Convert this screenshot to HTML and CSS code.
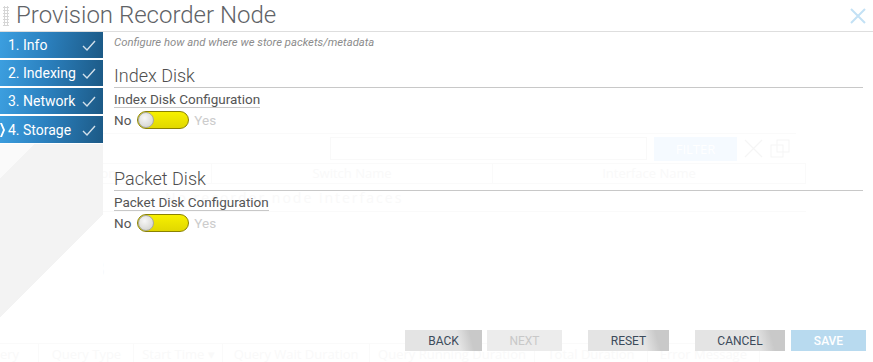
FILE: index.html
```html
<!DOCTYPE html>
<html lang="en">
<head>
  <meta charset="UTF-8" />
  <meta name="viewport" content="width=device-width, initial-scale=1.0" />
  <title>Provision Recorder Node</title>
  <link rel="stylesheet" href="styles.css">
</head>
<body>

  <!-- page behind the dialog, shows through faintly -->
  <div class="backdrop">
    <div class="ghost-toolbar">
      <div class="ghost-input"></div>
      <div class="ghost-filter">FILTER</div>
      <svg class="ghost-icon" width="19" height="19" viewBox="0 0 19 19"><path d="M1 1 L18 18 M18 1 L1 18" stroke="#f5f5f5" stroke-width="1.2" fill="none"/></svg>
      <svg class="ghost-icon" width="20" height="20" viewBox="0 0 20 20"><rect x="1" y="6" width="12" height="12" stroke="#f5f5f5" fill="none"/><rect x="7" y="1" width="12" height="12" stroke="#f5f5f5" fill="none"/></svg>
    </div>
    <div class="ghost-table">
      <div class="ghost-head">
        <div class="gcell first">Description</div>
        <div class="gcell second">Switch Name</div>
        <div class="gcell third">Interface Name</div>
      </div>
      <div class="ghost-empty">No recorder node interfaces</div>
    </div>
    <div class="ghost-size">256.00 MB</div>
    <div class="ghost-grid">
      <div class="gcol w40 right">ery</div>
      <div class="gcol w97">Query Type</div>
      <div class="gcol w91">Start Time ▾</div>
      <div class="gcol w150">Query Wait Duration</div>
      <div class="gcol w170">Query Running Duration</div>
      <div class="gcol w115">Total Duration</div>
      <div class="gcol w115">Error Message</div>
    </div>
  </div>

  <div class="modal">
    <div class="modal-head">
      <div class="grip"></div>
      <h1 class="modal-title">Provision Recorder Node</h1>
      <svg class="close" width="16" height="16" viewBox="0 0 16 16"><path d="M1 1 L15 15 M15 1 L1 15" stroke="#c3e1f5" stroke-width="2" fill="none"/></svg>
    </div>

    <div class="modal-body">
      <nav class="steps">
        <div class="step"><span>1. Info</span><svg class="tick" width="14" height="11" viewBox="0 0 14 11"><path d="M1 6 L5 10 L13 1" stroke="rgba(255,255,255,0.8)" stroke-width="1.4" fill="none"/></svg></div>
        <div class="step"><span>2. Indexing</span><svg class="tick" width="14" height="11" viewBox="0 0 14 11"><path d="M1 6 L5 10 L13 1" stroke="rgba(255,255,255,0.8)" stroke-width="1.4" fill="none"/></svg></div>
        <div class="step"><span>3. Network</span><svg class="tick" width="14" height="11" viewBox="0 0 14 11"><path d="M1 6 L5 10 L13 1" stroke="rgba(255,255,255,0.8)" stroke-width="1.4" fill="none"/></svg></div>
        <div class="step active">
          <svg class="marker" width="6" height="14" viewBox="0 0 6 14"><polygon points="0,0 2,0 5,7 2,14 0,14 3,7" fill="#ffffff"/></svg>
          <span>4. Storage</span><svg class="tick" width="14" height="11" viewBox="0 0 14 11"><path d="M1 6 L5 10 L13 1" stroke="rgba(255,255,255,0.8)" stroke-width="1.4" fill="none"/></svg>
        </div>
        <div class="steps-fill"></div>
      </nav>

      <main class="pane">
        <p class="hint">Configure how and where we store packets/metadata</p>

        <section class="disk">
          <h2>Index Disk</h2>
          <div class="field-label">Index Disk Configuration</div>
          <div class="switch-row">
            <span class="no">No</span>
            <span class="switch"><span class="knob"></span></span>
            <span class="yes">Yes</span>
          </div>
        </section>

        <section class="disk">
          <h2>Packet Disk</h2>
          <div class="field-label">Packet Disk Configuration</div>
          <div class="switch-row">
            <span class="no">No</span>
            <span class="switch"><span class="knob"></span></span>
            <span class="yes">Yes</span>
          </div>
        </section>
      </main>
    </div>

    <div class="actions">
      <button class="btn back">BACK</button>
      <button class="btn next" disabled>NEXT</button>
      <button class="btn reset">RESET</button>
      <button class="btn cancel">CANCEL</button>
      <button class="btn save">SAVE</button>
    </div>
  </div>

</body>
</html>
```

FILE: styles.css
```css
body {
  font-family: Roboto, "Liberation Sans", sans-serif;
  background-color: #ffffff;
  margin: 0;
  width: 873px;
  height: 362px;
  overflow: hidden;
  position: relative;
}

/* ---------- faint page behind the dialog ---------- */

.backdrop {
  padding-top: 133px;
  color: #f9f9f9;
  font-size: 13px;
  font-family: "Open Sans", sans-serif;
}

.ghost-toolbar {
  display: flex;
  align-items: center;
  width: 796px;
  height: 30px;
  border-top: 1px solid #fafafa;
  box-sizing: border-box;
}

.ghost-input {
  margin-left: 330px;
  width: 317px;
  height: 23px;
  border: 1px solid #f9f9f9;
  box-sizing: border-box;
}

.ghost-filter {
  margin-left: 7px;
  width: 83px;
  height: 24px;
  line-height: 24px;
  text-align: center;
  background-color: #f5faff;
  color: #ffffff;
}

.ghost-icon {
  margin-left: 7px;
}

.ghost-table {
  width: 806px;
}

.ghost-head {
  display: flex;
  height: 19px;
  border: 1px solid #fafafa;
  border-left: none;
}

.gcell {
  line-height: 19px;
  text-align: center;
  border-right: 1px solid #fafafa;
}

.gcell.first { width: 212px; padding-right: 48px; box-sizing: border-box; }
.gcell.second { width: 280px; }
.gcell.third { flex: 1; border-right: none; }

.ghost-empty {
  height: 27px;
  line-height: 27px;
  padding-left: 165px;
  letter-spacing: 2px;
  font-size: 14px;
  border-bottom: 1px solid #fafafa;
}

.ghost-size {
  margin-top: 45px;
  padding-left: 10px;
  font-size: 20px;
  font-weight: 300;
  font-family: Roboto, sans-serif;
  color: #f7f7f7;
}

.ghost-grid {
  display: flex;
  margin-top: 62px;
  height: 20px;
  border-top: 1px solid #fafafa;
  width: 760px;
}

.gcol {
  line-height: 20px;
  text-align: center;
  border-right: 1px solid #fafafa;
  white-space: nowrap;
  overflow: hidden;
}

.gcol.right { text-align: right; padding-right: 22px; box-sizing: border-box; }
.w40 { width: 40px; }
.w97 { width: 97px; }
.w91 { width: 91px; }
.w150 { width: 150px; }
.w170 { width: 170px; }
.w115 { width: 115px; }

/* ---------- dialog ---------- */

.modal {
  position: absolute;
  top: 0;
  left: 0;
  width: 873px;
  height: 362px;
  display: flex;
  flex-direction: column;
}

.modal-head {
  display: flex;
  align-items: center;
  height: 31px;
  border-bottom: 1px solid #dedede;
  background-color: #ffffff;
}

.grip {
  margin-left: 3px;
  width: 6px;
  height: 20px;
  background-image: radial-gradient(circle, #d6d6d6 1px, transparent 1.2px);
  background-size: 3px 3px;
}

.modal-title {
  margin: 0 0 0 7px;
  font-size: 24px;
  font-weight: 300;
  color: #5f6367;
  line-height: 31px;
}

.close {
  margin-left: auto;
  margin-right: 7px;
}

.modal-body {
  display: flex;
  height: 293px;
}

.steps {
  width: 103px;
  display: flex;
  flex-direction: column;
}

.step {
  position: relative;
  display: flex;
  align-items: center;
  justify-content: space-between;
  height: 26px;
  margin-bottom: 2px;
  padding: 0 7px 0 8px;
  color: #ffffff;
  font-size: 14px;
  background: linear-gradient(100deg, #3c9fe0 0%, #2b80be 45%, #1c5985 100%);
}

.step.active {
  height: 27px;
}

.marker {
  position: absolute;
  left: 0;
  top: 7px;
}

.tick {
  margin-top: 1px;
}

.steps-fill {
  flex: 1;
  margin-top: -1px;
  background: linear-gradient(135deg, #fafafa 12%, #f3f3f3 12%, #f3f3f3 61%, #ffffff 61%);
}

.pane {
  flex: 1;
  padding: 0 10px 0 11px;
  color: #555555;
}

.hint {
  margin: 4px 0 0 0;
  font-size: 11.3px;
  line-height: 14px;
  font-style: italic;
  color: #8c8c8c;
}

.disk {
  margin-top: 13px;
}

.disk + .disk {
  margin-top: 37px;
}

.disk h2 {
  margin: 0;
  font-size: 18px;
  font-weight: 300;
  line-height: 22px;
  padding-top: 2px;
  border-bottom: 1px solid #c8c8c8;
  color: #4f4f4f;
}

.field-label {
  display: inline-block;
  margin-top: 3px;
  font-size: 13.5px;
  line-height: 16px;
  border-bottom: 1px solid #c8c8c8;
  color: #555555;
}

.switch-row {
  display: flex;
  align-items: center;
  margin-top: 3px;
  height: 18px;
  font-size: 13.5px;
}

.no {
  color: #555555;
}

.switch {
  display: block;
  margin-left: 6px;
  width: 52px;
  height: 18px;
  box-sizing: border-box;
  border: 1px solid #8b8200;
  border-radius: 9px;
  background: linear-gradient(#f7f000, #e1d800);
  position: relative;
}

.knob {
  position: absolute;
  left: 0;
  top: 0;
  width: 16px;
  height: 16px;
  border-radius: 50%;
  box-sizing: border-box;
  border: 1px solid #a8a8a0;
  background: radial-gradient(circle at 40% 35%, #f7f7f7, #cdcdc8);
}

.yes {
  margin-left: 5px;
  color: #cccccc;
}

.actions {
  display: flex;
  align-items: flex-start;
  padding: 5px 7px 0 0;
  height: 37px;
  box-sizing: border-box;
  justify-content: flex-end;
}

.btn {
  height: 21px;
  border: none;
  padding: 0;
  font-family: Roboto, "Liberation Sans", sans-serif;
  font-size: 12px;
  color: #3c4b5b;
  background: linear-gradient(75deg, #e4e4e4 68%, #c9c9c9 84%);
  cursor: pointer;
}

.back { width: 77px; }
.next {
  width: 75px;
  margin-left: 5px;
  background: #ececec;
  color: #c8c8c8;
}
.reset { width: 81px; margin-left: 26px; }
.cancel { width: 90px; margin-left: 26px; }
.save {
  width: 75px;
  margin-left: 6px;
  background: #b8daef;
  color: #ffffff;
  font-weight: 500;
}
```
